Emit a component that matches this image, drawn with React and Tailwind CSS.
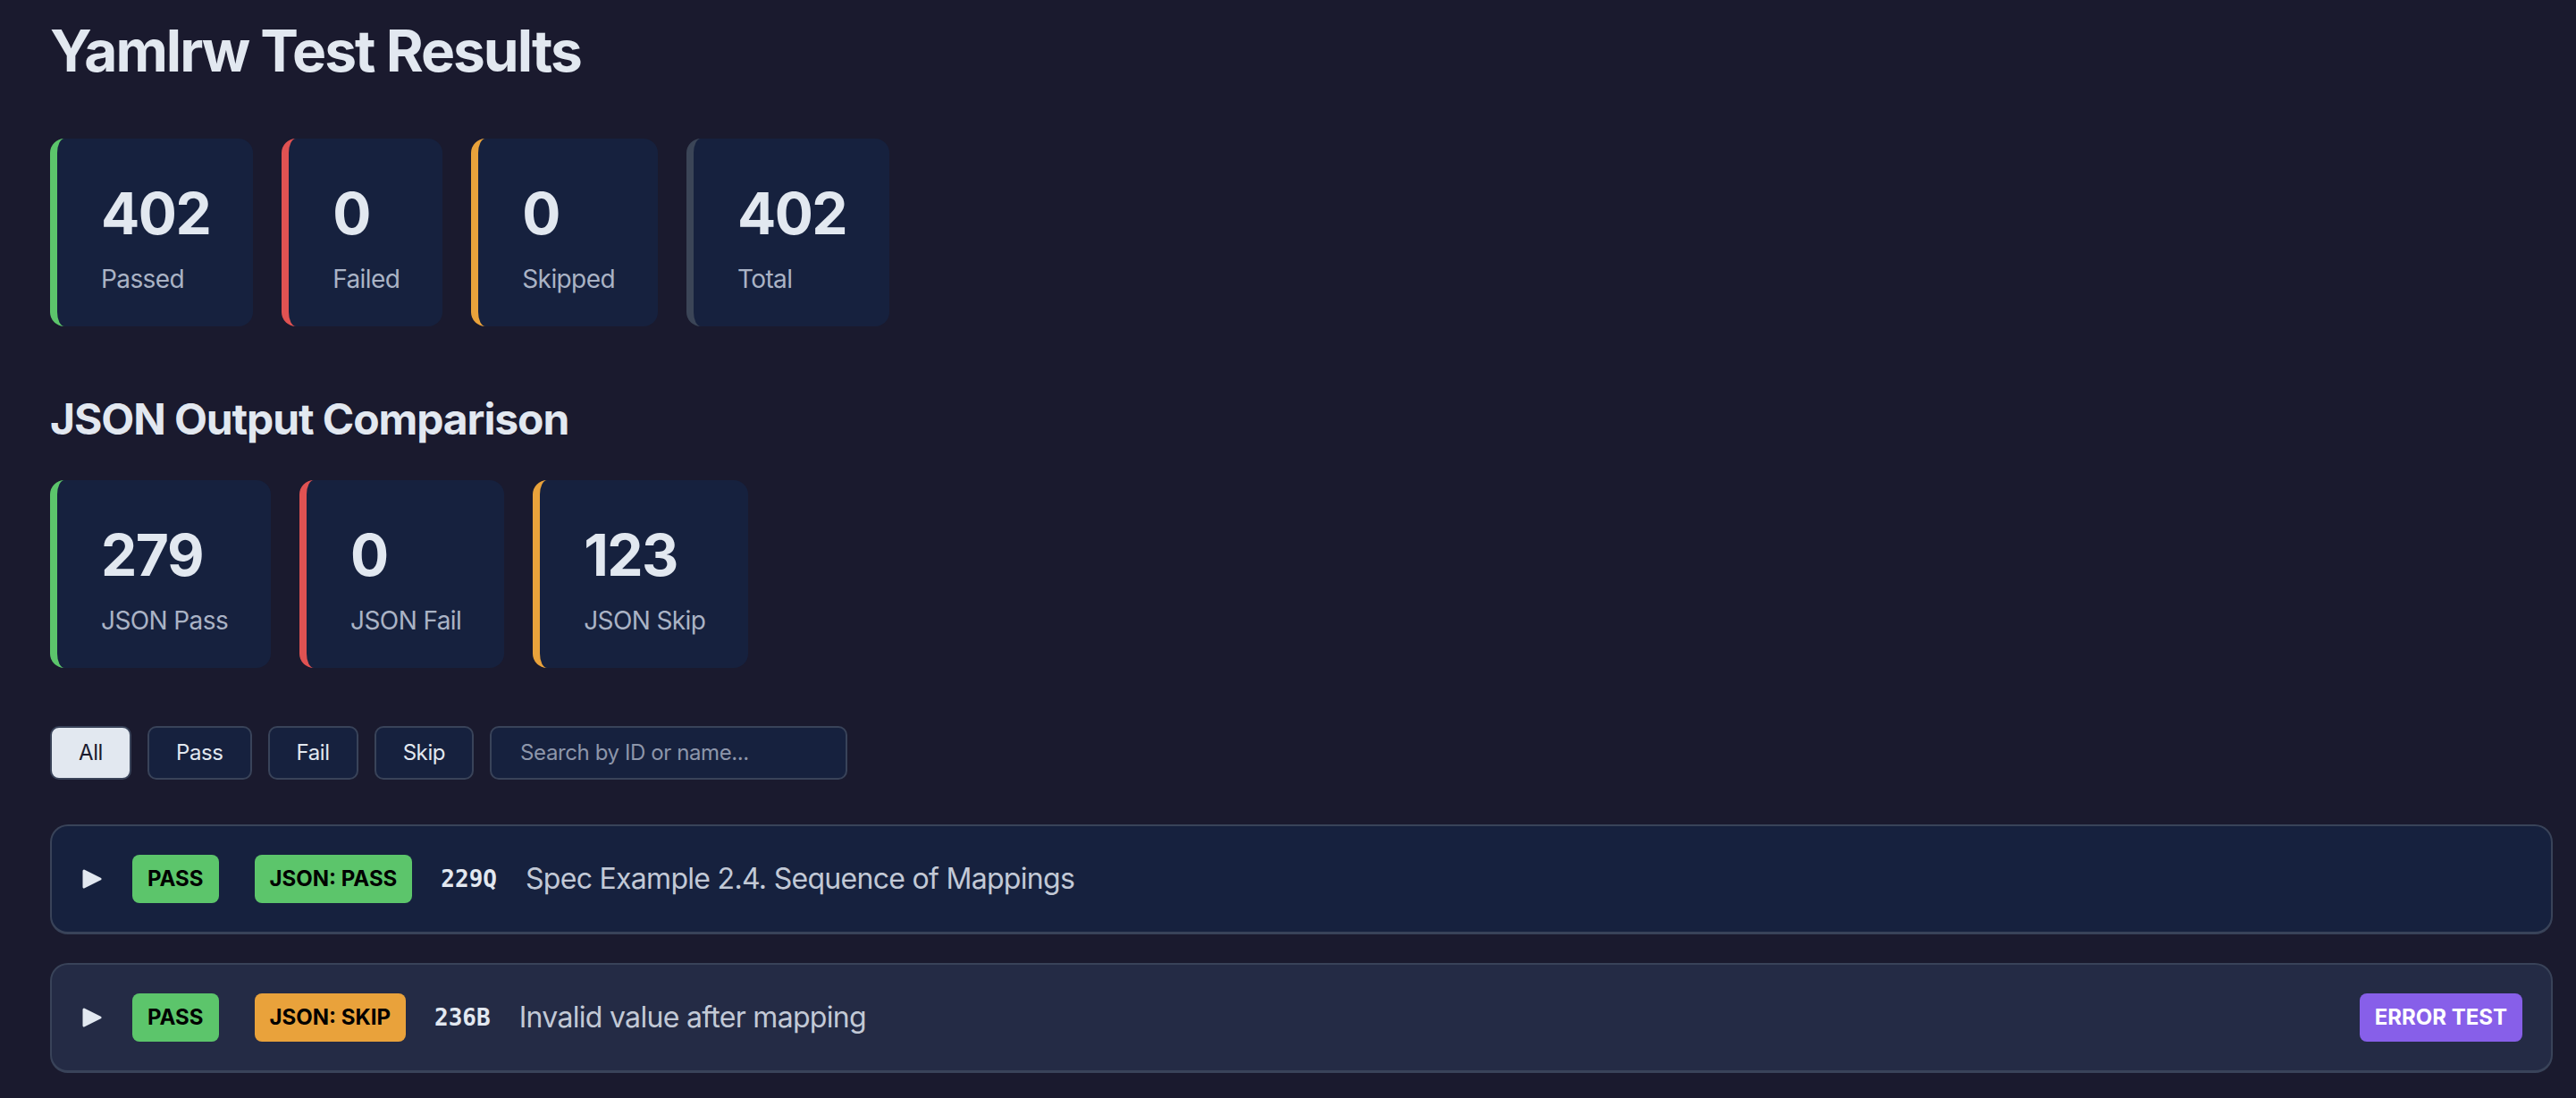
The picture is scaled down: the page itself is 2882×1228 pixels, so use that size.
import React from "react";

function StatCard({ value, label, border }) {
  return (
    <div className={`rounded-[16px] border-l-[8px] ${border} bg-[#16213e] pl-[49px] pr-[48px] pt-[52px] pb-[32px]`}>
      <div className="text-[64px] font-bold leading-none tracking-[-1.5px] text-[#e2e8f0]">{value}</div>
      <div className="mt-[20px] text-[28px] leading-[42px] tracking-[-0.6px] text-[#aab3c5]">{label}</div>
    </div>
  );
}

function Triangle() {
  return (
    <svg width="22" height="22" viewBox="0 0 22 22" className="mr-[2px] shrink-0">
      <path d="M2 2 L20 11 L2 20 Z" fill="#e2e8f0" stroke="#e2e8f0" strokeWidth="3" strokeLinejoin="round" />
    </svg>
  );
}

function Badge({ children, color, text = "text-black", extra = "" }) {
  return (
    <span className={`flex h-[54px] items-center rounded-[8px] px-[17px] text-[24px] font-bold ${color} ${text} ${extra}`}>
      {children}
    </span>
  );
}

function Row({ bg, json, jsonColor, id, name, error }) {
  return (
    <div className={`flex items-center gap-[32px] rounded-[20px] border-2 border-b-[3px] border-[#394359] ${bg} py-[32px] pl-[34px] pr-[32px]`}>
      <Triangle />
      <Badge color="bg-[#5cc56b]">PASS</Badge>
      <Badge color={jsonColor} extra="ml-[8px]">{json}</Badge>
      <span className="font-['DejaVu_Sans_Mono',monospace] text-[26px] font-bold text-[#e2e8f0]">{id}</span>
      <span className="text-[32px] tracking-[-0.7px] text-[#c2c9d6]">{name}</span>
      {error && (
        <Badge color="bg-[#875fe9]" text="text-white" extra="ml-auto">ERROR TEST</Badge>
      )}
    </div>
  );
}

const btn = "rounded-[10px] border-2 border-[#394359] px-[30px] text-[24px] tracking-[-0.4px]";

export default function App() {
  return (
    <div className="min-h-screen bg-[#1a1a2e] pt-[25px] pl-[56px] pr-[26px] pb-[40px] font-['Inter',sans-serif] text-[#e2e8f0]">
      <h1 className="text-[64px] font-bold leading-none tracking-[-2px]">Yamlrw Test Results</h1>
      <div className="mt-[66px] flex gap-[32px]">
        <StatCard value="402" label="Passed" border="border-[#5cc56b]" />
        <StatCard value="0" label="Failed" border="border-[#e05252]" />
        <StatCard value="0" label="Skipped" border="border-[#e9a23b]" />
        <StatCard value="402" label="Total" border="border-[#3b4557]" />
      </div>
      <h2 className="mt-[80px] text-[48px] font-bold leading-none tracking-[-1.1px]">JSON Output Comparison</h2>
      <div className="mt-[44px] flex gap-[32px]">
        <StatCard value="279" label="JSON Pass" border="border-[#5cc56b]" />
        <StatCard value="0" label="JSON Fail" border="border-[#e05252]" />
        <StatCard value="123" label="JSON Skip" border="border-[#e9a23b]" />
      </div>
      <div className="mt-[65px] flex h-[60px] gap-[18px]">
        <button className={`${btn} bg-[#e2e8f0] text-[#1a1a2e]`}>All</button>
        <button className={`${btn} bg-[#16213e] text-[#e2e8f0]`}>Pass</button>
        <button className={`${btn} bg-[#16213e] text-[#e2e8f0]`}>Fail</button>
        <button className={`${btn} bg-[#16213e] text-[#e2e8f0]`}>Skip</button>
        <input
          readOnly
          placeholder="Search by ID or name..."
          className="w-[400px] rounded-[10px] border-2 border-[#394359] bg-[#16213e] px-[32px] text-[24px] tracking-[-0.4px] text-[#e2e8f0] outline-none placeholder:text-[#8d96aa]"
        />
      </div>
      <div className="mt-[50px] flex flex-col gap-[32px]">
        <Row bg="bg-[#16213e]" json="JSON: PASS" jsonColor="bg-[#5cc56b]" id="229Q" name="Spec Example 2.4. Sequence of Mappings" />
        <Row bg="bg-[#242b45]" json="JSON: SKIP" jsonColor="bg-[#e9a23b]" id="236B" name="Invalid value after mapping" error />
      </div>
    </div>
  );
}
